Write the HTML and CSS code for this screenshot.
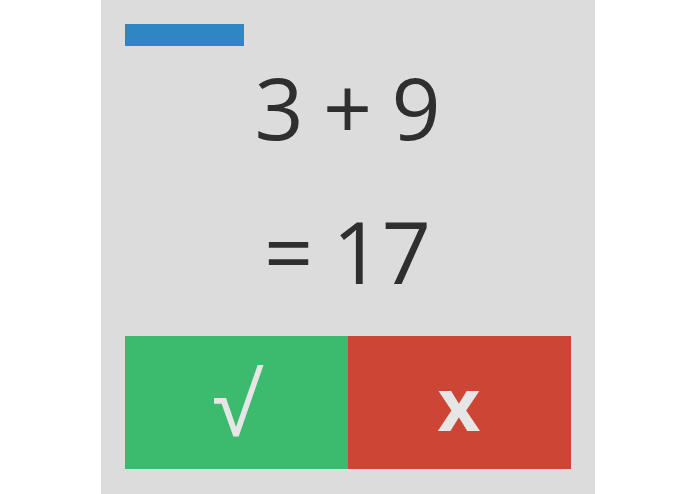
FILE: index.html
```html
<!DOCTYPE html>
<html lang="en">
<head>
    <meta charset="UTF-8">
    <meta name="viewport" content="width=device-width, initial-scale=1.0">
    <title>Quick Math</title>
    <link rel="stylesheet" href="styles.css">
</head>
<body>
    <div class="game">
        <div class="timer"><div class="timer-bar"></div></div>

        <div class="question">3 + 9</div>
        <div class="answer">= 17</div>

        <div class="choices">
            <button class="choice yes">&radic;</button>
            <button class="choice no">x</button>
        </div>
    </div>
</body>
</html>
```

FILE: styles.css
```css
:root {
    --panel-color: #dcdcdc;
    --text-color: #2f2f2f;
    --timer-color: #2e86c4;
    --yes-color: #3cba6e;
    --no-color: #cd4535;
    --button-text: #e6e6e6;
}

* {
    margin: 0;
    padding: 0;
    box-sizing: border-box;
    font-family: 'Open Sans', 'Noto Sans', sans-serif;
}

body {
    background-color: white;
    color: var(--text-color);
}

.game {
    width: 494px;
    min-height: 100vh;
    margin: 0 auto;
    padding: 24px;
    background-color: var(--panel-color);
}

.timer {
    height: 22px;
}

.timer-bar {
    width: 119px;
    height: 100%;
    background-color: var(--timer-color);
}

.question,
.answer {
    text-align: center;
    font-size: 86px;
    line-height: 1;
    word-spacing: -3px;
}

.question {
    margin-top: 18px;
}

.answer {
    margin-top: 58px;
}

.choices {
    display: flex;
    margin-top: 42px;
    height: 133px;
}

.choice {
    flex: 1;
    border: none;
    color: var(--button-text);
    font-size: 86px;
    cursor: pointer;
    display: flex;
    align-items: center;
    justify-content: center;
}

.choice.yes {
    background-color: var(--yes-color);
}

.choice.no {
    background-color: var(--no-color);
    font-size: 74px;
    font-weight: 700;
}
```
